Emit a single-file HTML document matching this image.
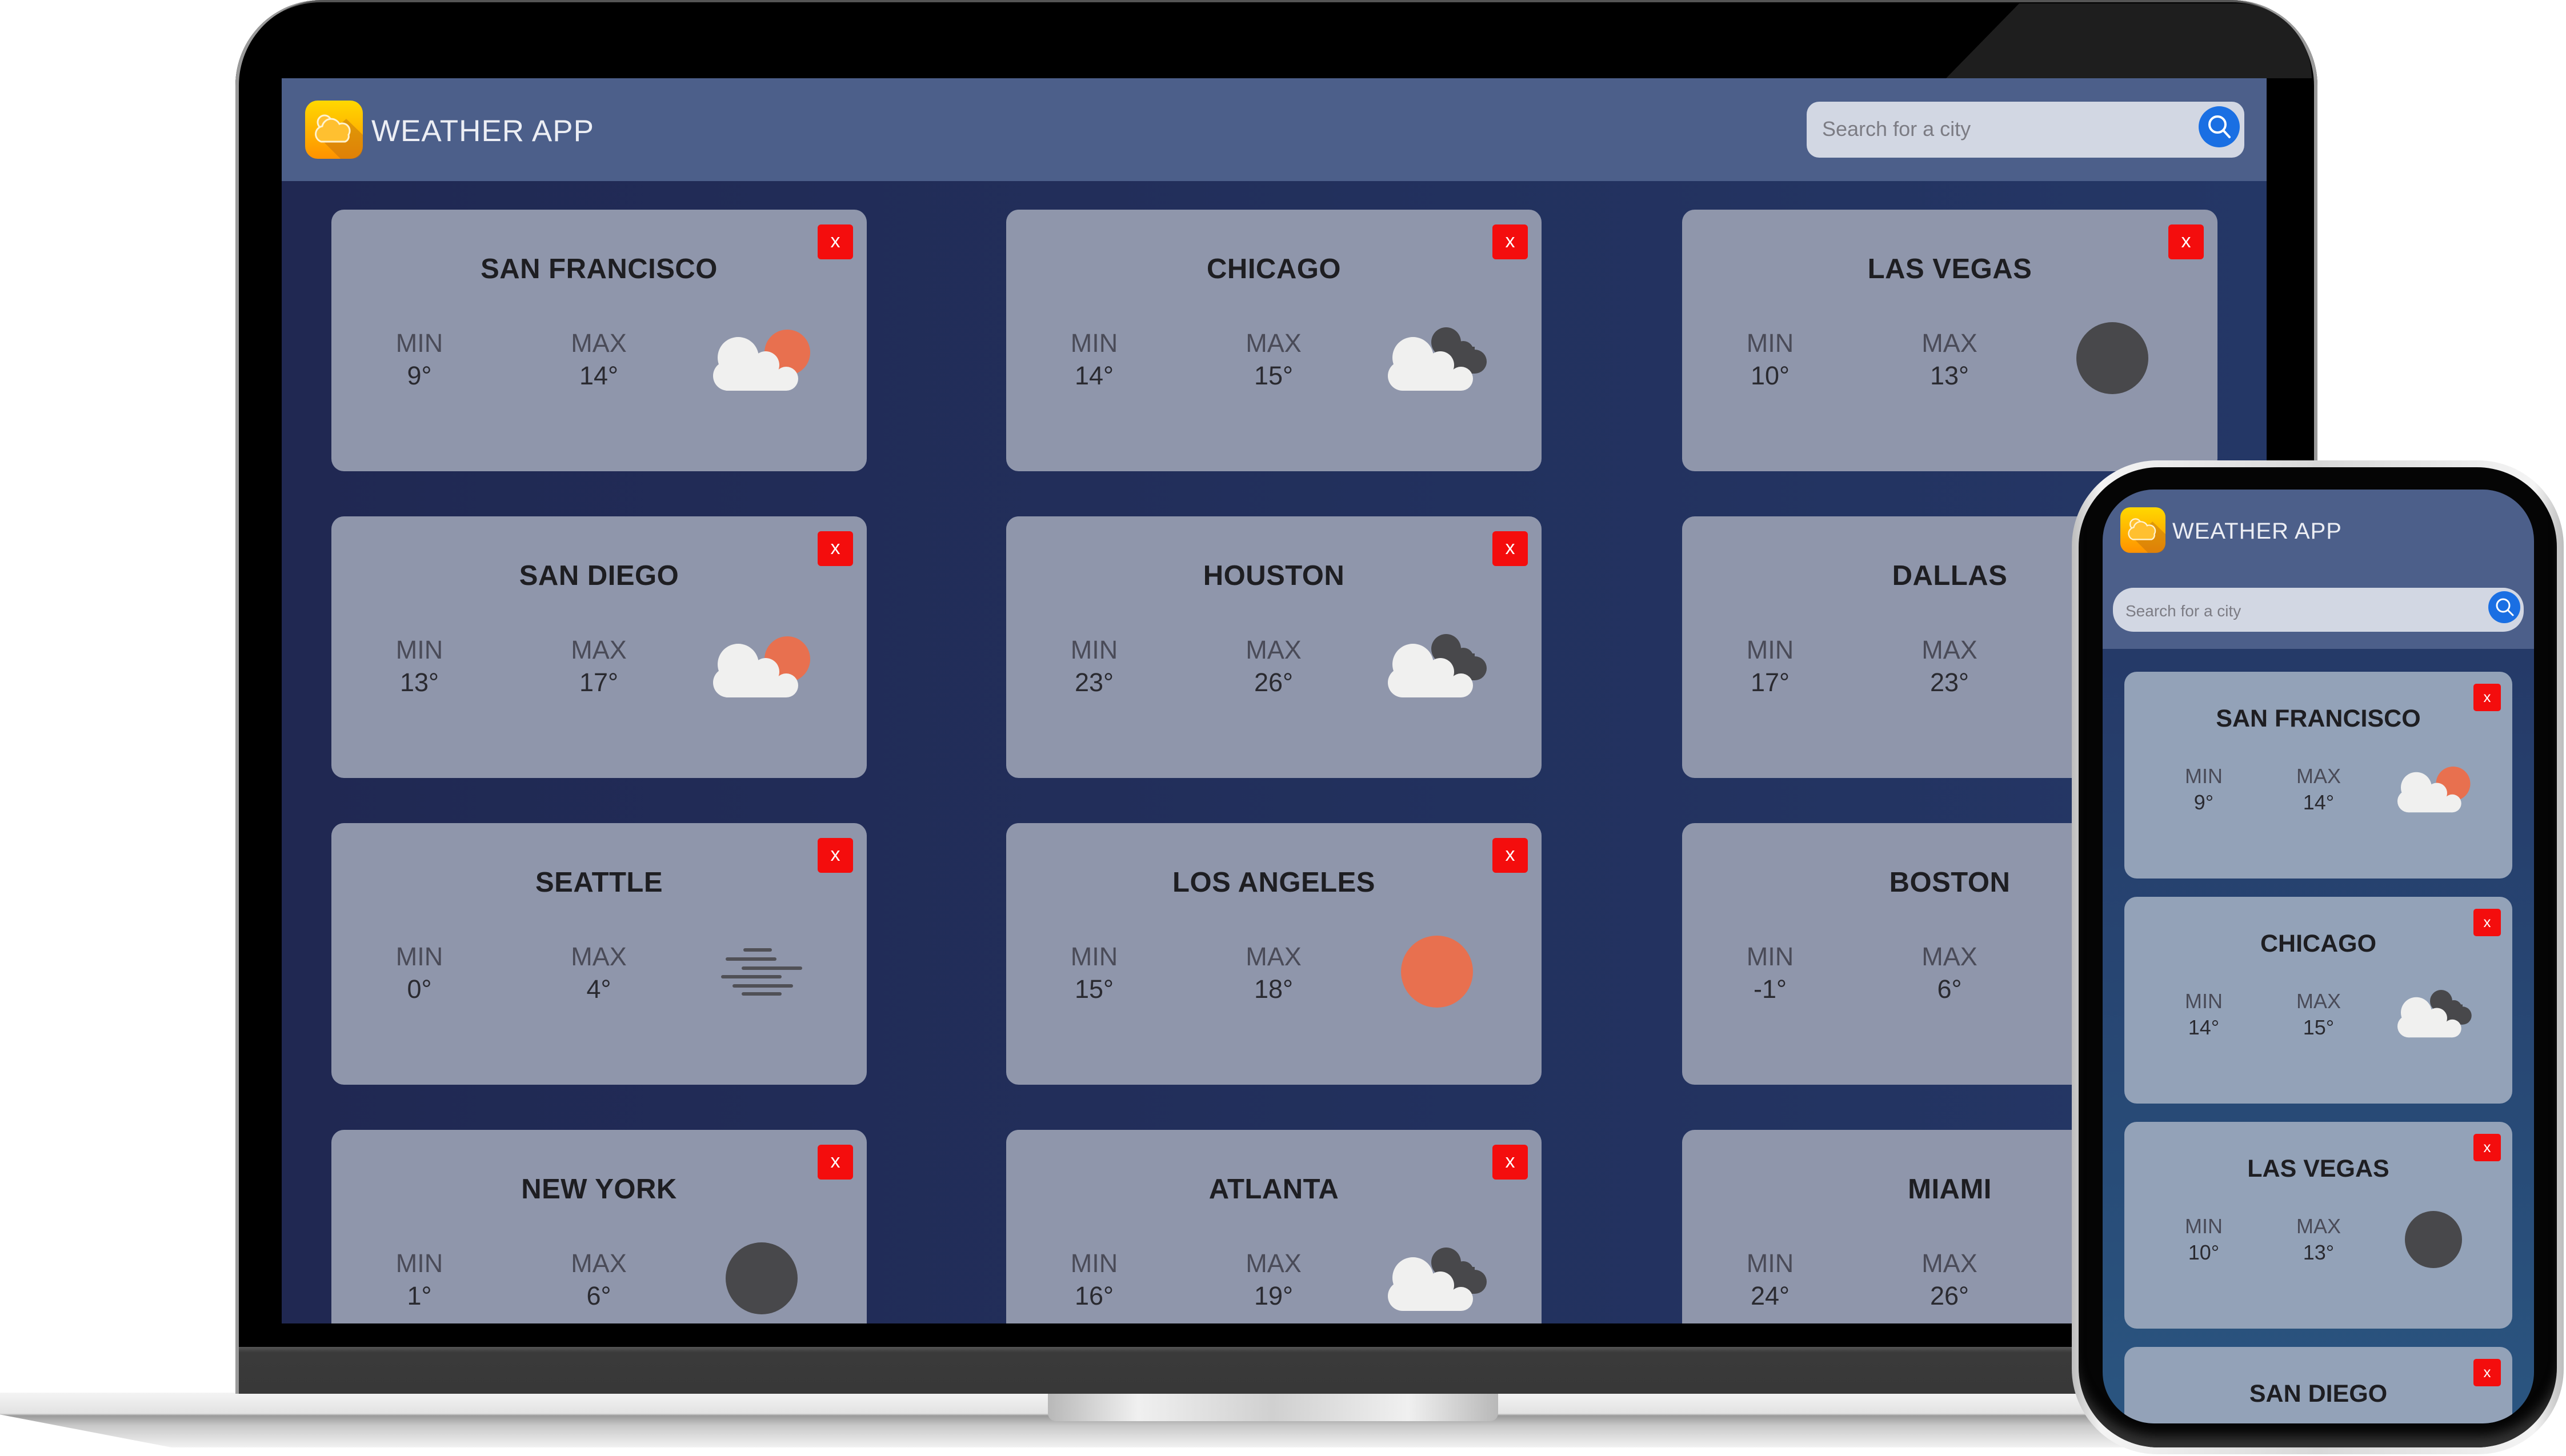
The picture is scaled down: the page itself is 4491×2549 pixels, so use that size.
<!DOCTYPE html>
<html><head><meta charset="utf-8"><style>
*{margin:0;padding:0;box-sizing:border-box}
html,body{width:4491px;height:2549px;overflow:hidden}
body{background:#fff;position:relative;font-family:"Liberation Sans",sans-serif}
.abs{position:absolute}
.card{position:absolute;width:937px;height:458px;background:#8f96ab;border-radius:22px}
.card .x{position:absolute;left:851px;top:26px;width:62px;height:61px;background:#f40d0d;border-radius:6px;color:#fff;font-size:34px;line-height:58px;text-align:center}
.card .t{position:absolute;left:0;width:937px;top:80px;text-align:center;font-size:49px;line-height:1;color:#1e1e22;font-weight:bold;letter-spacing:0.5px}
.card .l{position:absolute;width:200px;text-align:center;font-size:45px;line-height:1;color:#4a4b58}
.card .v{position:absolute;width:200px;text-align:center;font-size:45px;line-height:1;color:#2a2a30}
.card .ic{position:absolute;left:640px;top:190px;width:220px;height:140px}
.pc{position:absolute;left:38px;width:679px;height:362px;background:#93a2b8;border-radius:22px}
.pc .x{position:absolute;left:611px;top:21px;width:48px;height:48px;background:#f40d0d;border-radius:5px;color:#fff;font-size:26px;line-height:46px;text-align:center}
.pc .t{position:absolute;left:0;width:679px;top:61px;text-align:center;font-size:43px;line-height:1;color:#1e1e22;font-weight:bold}
.pc .l{position:absolute;width:180px;text-align:center;font-size:36px;line-height:1;color:#4a4b58}
.pc .v{position:absolute;width:180px;text-align:center;font-size:36px;line-height:1;color:#2a2a30}
.pc .ic{position:absolute;left:457px;top:151px;width:165px;height:105px}
</style></head><body>

<!-- laptop base -->
<div class="abs" style="left:0;top:2438px;width:3720px;height:96px;clip-path:polygon(0 0,100% 0,100% 100%,300px 100%,0 40%);background:linear-gradient(#f4f4f4 0,#e2e2e2 38%,#9a9a9a 42%,#c8c8c8 60%,#f2f2f2 100%)"></div>
<div class="abs" style="left:1834px;top:2438px;width:788px;height:50px;border-radius:0 0 14px 14px;background:linear-gradient(90deg,#b8b8b8,#f0f0f0 20%,#d0d0d0 50%,#f0f0f0 80%,#b8b8b8)"></div>

<!-- laptop lid -->
<div class="abs" style="left:412px;top:0;width:3644px;height:2440px;border-radius:150px 150px 0 0;background:#000;box-shadow:inset 6px 0 0 #9a9a9a, inset -6px 0 0 #9a9a9a, inset 0 4px 0 #555"></div>
<div class="abs" style="left:3406px;top:6px;width:640px;height:131px;background:#1e1e1e;clip-path:polygon(128px 0,100% 0,100% 100%,0 100%);border-top-right-radius:145px"></div>
<div class="abs" style="left:418px;top:2358px;width:3632px;height:82px;background:linear-gradient(#555 0,#3a3a3a 12%,#383838 100%)"></div>

<!-- laptop screen -->
<div class="abs" style="left:493px;top:137px;width:3474px;height:2180px;overflow:hidden;background:linear-gradient(90deg,#202852,#243766)">
 <div class="abs" style="left:0;top:0;width:3474px;height:180px;background:#4c5f8a"></div>
 <svg class="abs" style="left:41px;top:39px" width="101" height="102" viewBox="0 0 101 102">
  <defs><linearGradient id="lg" x1="0" y1="0" x2="0" y2="1"><stop offset="0" stop-color="#ffd800"/><stop offset="1" stop-color="#ff9200"/></linearGradient></defs>
  <rect width="101" height="102" rx="22" fill="url(#lg)"/>
  <path d="M30 70 L62 102 L80 102 Q101 102 101 80 L101 60 L72 32 Z" fill="#b86a10" opacity=".45"/>
  <g fill="#ffc030" stroke="#fff3d0" stroke-width="3"><circle cx="34" cy="38" r="12"/><path d="M28 72 a14 14 0 0 1 2-27 a16 16 0 0 1 30-4 a13 13 0 0 1 16 19 a10 10 0 0 1-6 12 Z"/></g>
 </svg>
 <div class="abs" style="left:157px;top:66px;font-size:53px;line-height:1;color:#eceef4;letter-spacing:1px">WEATHER APP</div>
 <div class="abs" style="left:2669px;top:41px;width:766px;height:98px;border-radius:22px;background:#d2d7e3"></div>
 <div class="abs" style="left:2696px;top:71px;font-size:36px;line-height:1;color:#7c7c84">Search for a city</div>
 <div class="abs" style="left:3355px;top:49px;width:72px;height:72px;border-radius:50%;background:#1a6fe3"></div>
 <svg class="abs" style="left:3355px;top:49px" width="72" height="72"><circle cx="33" cy="32" r="14" fill="none" stroke="#fff" stroke-width="4"/><line x1="43" y1="42" x2="54" y2="54" stroke="#fff" stroke-width="4" stroke-linecap="round"/></svg>

 <!-- row 1 -->
 <div class="card" style="left:87px;top:230px"><div class="x">x</div><div class="t">SAN FRANCISCO</div>
  <div class="l" style="left:54px;top:211px">MIN</div><div class="l" style="left:368px;top:211px">MAX</div>
  <div class="v" style="left:54px;top:268px">9°</div><div class="v" style="left:368px;top:268px">14°</div>
  <svg class="ic" viewBox="640 190 220 140"><circle cx="798" cy="250" r="40" fill="#e8704f"/><g fill="#f0f0ef"><circle cx="694" cy="291" r="26"/><circle cx="712" cy="259" r="36"/><circle cx="760" cy="272" r="24"/><circle cx="796" cy="296" r="21"/><rect x="694" y="280" width="102" height="37"/></g></svg></div>
 <div class="card" style="left:1268px;top:230px"><div class="x">x</div><div class="t">CHICAGO</div>
  <div class="l" style="left:54px;top:211px">MIN</div><div class="l" style="left:368px;top:211px">MAX</div>
  <div class="v" style="left:54px;top:268px">14°</div><div class="v" style="left:368px;top:268px">15°</div>
  <svg class="ic" viewBox="640 190 220 140"><g fill="#48484b"><circle cx="770" cy="232" r="26"/><circle cx="800" cy="248" r="18"/><circle cx="820" cy="266" r="21"/><rect x="770" y="240" width="50" height="47"/></g><g fill="#f0f0ef"><circle cx="694" cy="291" r="26"/><circle cx="712" cy="259" r="36"/><circle cx="760" cy="272" r="24"/><circle cx="796" cy="296" r="21"/><rect x="694" y="280" width="102" height="37"/></g></svg></div>
 <div class="card" style="left:2451px;top:230px"><div class="x">x</div><div class="t">LAS VEGAS</div>
  <div class="l" style="left:54px;top:211px">MIN</div><div class="l" style="left:368px;top:211px">MAX</div>
  <div class="v" style="left:54px;top:268px">10°</div><div class="v" style="left:368px;top:268px">13°</div>
  <div class="abs" style="left:690px;top:197px;width:126px;height:126px;border-radius:50%;background:#48484b"></div></div>

 <!-- row 2 -->
 <div class="card" style="left:87px;top:767px"><div class="x">x</div><div class="t">SAN DIEGO</div>
  <div class="l" style="left:54px;top:211px">MIN</div><div class="l" style="left:368px;top:211px">MAX</div>
  <div class="v" style="left:54px;top:268px">13°</div><div class="v" style="left:368px;top:268px">17°</div>
  <svg class="ic" viewBox="640 190 220 140"><circle cx="798" cy="250" r="40" fill="#e8704f"/><g fill="#f0f0ef"><circle cx="694" cy="291" r="26"/><circle cx="712" cy="259" r="36"/><circle cx="760" cy="272" r="24"/><circle cx="796" cy="296" r="21"/><rect x="694" y="280" width="102" height="37"/></g></svg></div>
 <div class="card" style="left:1268px;top:767px"><div class="x">x</div><div class="t">HOUSTON</div>
  <div class="l" style="left:54px;top:211px">MIN</div><div class="l" style="left:368px;top:211px">MAX</div>
  <div class="v" style="left:54px;top:268px">23°</div><div class="v" style="left:368px;top:268px">26°</div>
  <svg class="ic" viewBox="640 190 220 140"><g fill="#48484b"><circle cx="770" cy="232" r="26"/><circle cx="800" cy="248" r="18"/><circle cx="820" cy="266" r="21"/><rect x="770" y="240" width="50" height="47"/></g><g fill="#f0f0ef"><circle cx="694" cy="291" r="26"/><circle cx="712" cy="259" r="36"/><circle cx="760" cy="272" r="24"/><circle cx="796" cy="296" r="21"/><rect x="694" y="280" width="102" height="37"/></g></svg></div>
 <div class="card" style="left:2451px;top:767px"><div class="x">x</div><div class="t">DALLAS</div>
  <div class="l" style="left:54px;top:211px">MIN</div><div class="l" style="left:368px;top:211px">MAX</div>
  <div class="v" style="left:54px;top:268px">17°</div><div class="v" style="left:368px;top:268px">23°</div></div>

 <!-- row 3 -->
 <div class="card" style="left:87px;top:1304px"><div class="x">x</div><div class="t">SEATTLE</div>
  <div class="l" style="left:54px;top:211px">MIN</div><div class="l" style="left:368px;top:211px">MAX</div>
  <div class="v" style="left:54px;top:268px">0°</div><div class="v" style="left:368px;top:268px">4°</div>
  <svg class="ic" viewBox="640 190 220 140"><g stroke="#505056" stroke-width="6" stroke-linecap="round"><line x1="724" y1="222" x2="768" y2="222"/><line x1="693" y1="238" x2="776" y2="238"/><line x1="721" y1="254" x2="821" y2="254"/><line x1="685" y1="269" x2="785" y2="269"/><line x1="705" y1="285" x2="805" y2="285"/><line x1="721" y1="299" x2="785" y2="299"/></g></svg></div>
 <div class="card" style="left:1268px;top:1304px"><div class="x">x</div><div class="t">LOS ANGELES</div>
  <div class="l" style="left:54px;top:211px">MIN</div><div class="l" style="left:368px;top:211px">MAX</div>
  <div class="v" style="left:54px;top:268px">15°</div><div class="v" style="left:368px;top:268px">18°</div>
  <div class="abs" style="left:691px;top:197px;width:126px;height:126px;border-radius:50%;background:#e8704f"></div></div>
 <div class="card" style="left:2451px;top:1304px"><div class="x">x</div><div class="t">BOSTON</div>
  <div class="l" style="left:54px;top:211px">MIN</div><div class="l" style="left:368px;top:211px">MAX</div>
  <div class="v" style="left:54px;top:268px">-1°</div><div class="v" style="left:368px;top:268px">6°</div></div>

 <!-- row 4 -->
 <div class="card" style="left:87px;top:1841px"><div class="x">x</div><div class="t">NEW YORK</div>
  <div class="l" style="left:54px;top:211px">MIN</div><div class="l" style="left:368px;top:211px">MAX</div>
  <div class="v" style="left:54px;top:268px">1°</div><div class="v" style="left:368px;top:268px">6°</div>
  <div class="abs" style="left:690px;top:197px;width:126px;height:126px;border-radius:50%;background:#48484b"></div></div>
 <div class="card" style="left:1268px;top:1841px"><div class="x">x</div><div class="t">ATLANTA</div>
  <div class="l" style="left:54px;top:211px">MIN</div><div class="l" style="left:368px;top:211px">MAX</div>
  <div class="v" style="left:54px;top:268px">16°</div><div class="v" style="left:368px;top:268px">19°</div>
  <svg class="ic" viewBox="640 190 220 140"><g fill="#48484b"><circle cx="770" cy="232" r="26"/><circle cx="800" cy="248" r="18"/><circle cx="820" cy="266" r="21"/><rect x="770" y="240" width="50" height="47"/></g><g fill="#f0f0ef"><circle cx="694" cy="291" r="26"/><circle cx="712" cy="259" r="36"/><circle cx="760" cy="272" r="24"/><circle cx="796" cy="296" r="21"/><rect x="694" y="280" width="102" height="37"/></g></svg></div>
 <div class="card" style="left:2451px;top:1841px"><div class="x">x</div><div class="t">MIAMI</div>
  <div class="l" style="left:54px;top:211px">MIN</div><div class="l" style="left:368px;top:211px">MAX</div>
  <div class="v" style="left:54px;top:268px">24°</div><div class="v" style="left:368px;top:268px">26°</div></div>
</div>

<!-- phone -->
<div class="abs" style="left:3626px;top:806px;width:861px;height:1740px;border-radius:150px;background:linear-gradient(90deg,#bdbdbd,#f4f4f4 6%,#d8d8d8 50%,#f4f4f4 94%,#bdbdbd)"></div>
<div class="abs" style="left:3638px;top:818px;width:837px;height:1716px;border-radius:140px;background:#050505;box-shadow:inset 0 -30px 20px -10px #333"></div>
<div class="abs" style="left:3680px;top:857px;width:755px;height:1635px;border-radius:90px;overflow:hidden;background:linear-gradient(#243463,#2a5580)">
 <div class="abs" style="left:0;top:0;width:755px;height:279px;background:#4c5f8a"></div>
 <svg class="abs" style="left:31px;top:31px" width="79" height="80" viewBox="0 0 101 102">
  <rect width="101" height="102" rx="22" fill="url(#lg)"/>
  <path d="M30 70 L62 102 L80 102 Q101 102 101 80 L101 60 L72 32 Z" fill="#b86a10" opacity=".45"/>
  <g fill="#ffc030" stroke="#fff3d0" stroke-width="3"><circle cx="34" cy="38" r="12"/><path d="M28 72 a14 14 0 0 1 2-27 a16 16 0 0 1 30-4 a13 13 0 0 1 16 19 a10 10 0 0 1-6 12 Z"/></g>
 </svg>
 <div class="abs" style="left:122px;top:53px;font-size:40px;line-height:1;color:#eceef4;letter-spacing:1px">WEATHER APP</div>
 <div class="abs" style="left:18px;top:172px;width:719px;height:77px;border-radius:36px;background:#d2d7e3"></div>
 <div class="abs" style="left:40px;top:199px;font-size:28px;line-height:1;color:#7c7c84">Search for a city</div>
 <div class="abs" style="left:675px;top:178px;width:56px;height:56px;border-radius:50%;background:#1a6fe3"></div>
 <svg class="abs" style="left:675px;top:178px" width="56" height="56"><circle cx="26" cy="25" r="11" fill="none" stroke="#fff" stroke-width="3"/><line x1="34" y1="33" x2="43" y2="42" stroke="#fff" stroke-width="3" stroke-linecap="round"/></svg>

 <div class="pc" style="top:319px"><div class="x">x</div><div class="t">SAN FRANCISCO</div>
  <div class="l" style="left:49px;top:165px">MIN</div><div class="l" style="left:250px;top:165px">MAX</div>
  <div class="v" style="left:49px;top:211px">9°</div><div class="v" style="left:250px;top:211px">14°</div>
  <svg class="ic" viewBox="640 190 220 140"><circle cx="798" cy="250" r="40" fill="#e8704f"/><g fill="#f0f0ef"><circle cx="694" cy="291" r="26"/><circle cx="712" cy="259" r="36"/><circle cx="760" cy="272" r="24"/><circle cx="796" cy="296" r="21"/><rect x="694" y="280" width="102" height="37"/></g></svg></div>
 <div class="pc" style="top:713px"><div class="x">x</div><div class="t">CHICAGO</div>
  <div class="l" style="left:49px;top:165px">MIN</div><div class="l" style="left:250px;top:165px">MAX</div>
  <div class="v" style="left:49px;top:211px">14°</div><div class="v" style="left:250px;top:211px">15°</div>
  <svg class="ic" viewBox="640 190 220 140"><g fill="#48484b"><circle cx="770" cy="232" r="26"/><circle cx="800" cy="248" r="18"/><circle cx="820" cy="266" r="21"/><rect x="770" y="240" width="50" height="47"/></g><g fill="#f0f0ef"><circle cx="694" cy="291" r="26"/><circle cx="712" cy="259" r="36"/><circle cx="760" cy="272" r="24"/><circle cx="796" cy="296" r="21"/><rect x="694" y="280" width="102" height="37"/></g></svg></div>
 <div class="pc" style="top:1107px"><div class="x">x</div><div class="t">LAS VEGAS</div>
  <div class="l" style="left:49px;top:165px">MIN</div><div class="l" style="left:250px;top:165px">MAX</div>
  <div class="v" style="left:49px;top:211px">10°</div><div class="v" style="left:250px;top:211px">13°</div>
  <div class="abs" style="left:491px;top:156px;width:100px;height:100px;border-radius:50%;background:#48484b"></div></div>
 <div class="pc" style="top:1501px"><div class="x">x</div><div class="t">SAN DIEGO</div></div>
</div>
</body></html>
